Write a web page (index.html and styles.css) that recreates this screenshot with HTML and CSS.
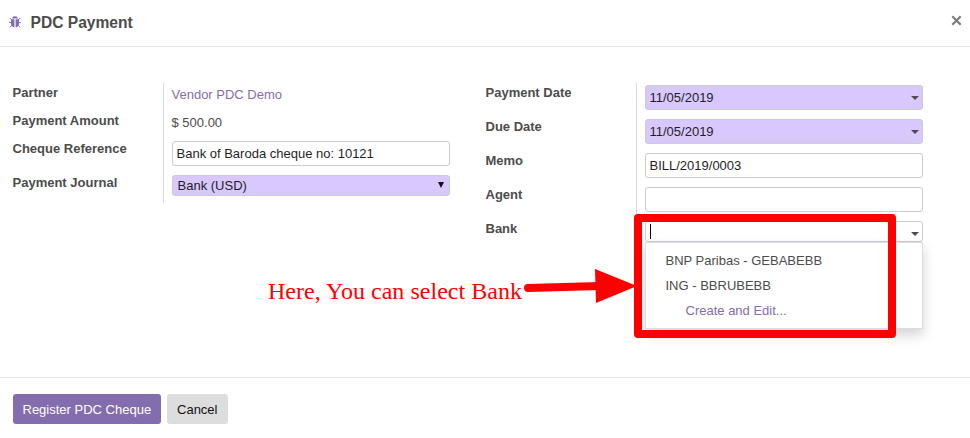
FILE: index.html
```
<!DOCTYPE html>
<html lang="en">
<head>
<meta charset="utf-8">
<title>PDC Payment</title>
<link rel="stylesheet" href="styles.css">
</head>
<body>
<div class="modal">
  <header class="modal-header">
    <svg class="bug" width="12" height="12" viewBox="0 0 12 12">
      <path d="M3.300 2.500C3.400 1 4.300.2 6 .2s2.600.8 2.700 2.300z"/>
      <path d="M2 3.300h3.400v8C3.400 11.200 2 9.900 2 7.700zM6.600 3.300H10v4.400c0 2.200-1.400 3.500-3.400 3.600z"/>
      <path class="legs" d="M3 4.200.8 2M2.600 6.600H0M3 9 1 11.300M9 4.200 11.200 2M9.400 6.600H12M9 9l2 2.300"/>
    </svg>
    <h1 class="title">PDC Payment</h1>
    <button class="close" aria-label="Close"><svg width="11" height="11" viewBox="0 0 11 11"><path d="M1.300 1.300 9.700 9.700M9.700 1.300 1.300 9.700"/></svg></button>
  </header>
  <main class="modal-body">
    <div class="group">
      <div class="labels">
        <label class="short">Partner</label>
        <label class="short">Payment Amount</label>
        <label>Cheque Reference</label>
        <label>Payment Journal</label>
      </div>
      <div class="values">
        <div class="plain link">Vendor PDC Demo</div>
        <div class="plain">$ 500.00</div>
        <div class="field">Bank of Baroda cheque no: 10121</div>
        <div class="field select required">Bank (USD)<svg class="select-arrow" width="6" height="6" viewBox="0 0 6 6"><path d="M0 0h6L3 6z"/></svg></div>
      </div>
    </div>
    <div class="group">
      <div class="labels">
        <label>Payment Date</label>
        <label>Due Date</label>
        <label>Memo</label>
        <label>Agent</label>
        <label>Bank</label>
      </div>
      <div class="values">
        <div class="field required">11/05/2019<i class="caret"></i></div>
        <div class="field required">11/05/2019<i class="caret"></i></div>
        <div class="field">BILL/2019/0003</div>
        <div class="field"></div>
        <div class="field bank"><span class="cursor"></span><i class="caret"></i>
          <ul class="menu">
            <li>BNP Paribas - GEBABEBB</li>
            <li>ING - BBRUBEBB</li>
            <li class="create">Create and Edit...</li>
          </ul>
        </div>
      </div>
    </div>
  </main>
  <footer class="modal-footer">
    <button class="btn primary">Register PDC Cheque</button>
    <button class="btn">Cancel</button>
  </footer>
  <svg class="annotation" width="970" height="438" viewBox="0 0 970 438">
    <rect class="frame" x="638" y="218" width="254" height="116"/>
    <path class="shaft" d="M528 288 600 286"/>
    <path class="head" d="M595 269 637 286 596 303z"/>
    <text class="note" x="268" y="299" textLength="254">Here, You can select Bank</text>
  </svg>
</div>
</body>
</html>
```
FILE: styles.css
```
* { box-sizing: border-box; }
body {
  margin: 0;
  background: #fff;
  color: #4c4c4c;
  font: 13px/18px "Liberation Sans", Arial, sans-serif;
}
.modal {
  position: relative;
  display: flex;
  flex-direction: column;
  height: 438px;
  overflow: hidden;
}
.modal-header {
  display: flex;
  align-items: center;
  height: 47px;
  padding: 0 8px 1px 9px;
  border-bottom: 1px solid #e5e5e5;
}
.bug { margin: 0 0 1px -.5px; fill: #846daf; }
.legs { fill: none; stroke: #846daf; stroke-width: .9; }
.title {
  flex: 1;
  margin: 0 0 0 10px;
  font-size: 15.6px;
  line-height: 22px;
}
.close {
  display: flex;
  padding: 0;
  margin-bottom: 5px;
  border: 0;
  background: none;
}
.close svg { fill: none; stroke: #7b7b7b; stroke-width: 2.2; }
.modal-body {
  display: flex;
  flex: 1;
  gap: 36px;
  padding: 36px 0 0 12.5px;
}
.group {
  display: flex;
  align-items: flex-start;
  width: 437px;
}
.labels {
  display: flex;
  flex-direction: column;
  width: 150.5px;
  font-weight: bold;
}
.labels label { height: 34px; padding-top: 1px; }
.labels .short { height: 28px; }
.values {
  display: flex;
  flex-direction: column;
  flex: 1;
  gap: 9px;
  padding: 2px 0 7px 8px;
  border-left: 1px solid #d9d9d9;
}
.plain { height: 19px; padding-top: 1px; margin-left: -.5px; }
.link { color: #846daf; }
.field {
  position: relative;
  height: 25px;
  padding: 3px 3.5px;
  border: 1px solid #ccc;
  border-radius: 3px;
  background: #fff;
  color: #1f1f1f;
}
.required { background: #d9c7ff; }
.select { height: 21px; padding: 1px 4.5px; }
.select-arrow { position: absolute; right: 5px; top: 6px; fill: #111; }
.caret {
  position: absolute;
  right: 3px;
  top: 10px;
  border: 4px solid transparent;
  border-top-color: #4c4c4c;
  border-bottom: 0;
}
.bank { height: 21px; }
.cursor {
  display: block;
  width: 1px;
  height: 15px;
  margin: -1px 0 0 .5px;
  background: #000;
}
.menu {
  position: absolute;
  left: -1px;
  top: 20px;
  width: 278px;
  height: 87px;
  margin: 0;
  padding: 5px 0;
  list-style: none;
  border: 1px solid #dcdce4;
  background: #fff;
  box-shadow: 0 6px 12px rgba(0, 0, 0, .175);
}
.menu li {
  height: 25px;
  padding-left: 19.5px;
  line-height: 25px;
  color: #4c4c4c;
}
.menu .create { padding-left: 39.5px; color: #846daf; }
.modal-footer {
  display: flex;
  gap: 6px;
  height: 61px;
  padding: 16px 13px;
  border-top: 1px solid #e5e5e5;
}
.btn {
  height: 30px;
  padding: 2px 10.4px 0;
  border: 0;
  border-radius: 3px;
  background: #ddd;
  color: #111;
  font: inherit;
}
.primary { padding: 2px 9.5px 0; background: #846daf; color: #fff; }
.annotation { position: absolute; left: 0; top: 0; pointer-events: none; }
.frame { fill: none; stroke: red; stroke-width: 8; stroke-linejoin: round; }
.shaft { stroke: red; stroke-width: 8; stroke-linecap: round; }
.head, .note { fill: red; }
.note { font: 24px "Liberation Serif", "Times New Roman", serif; }
```
